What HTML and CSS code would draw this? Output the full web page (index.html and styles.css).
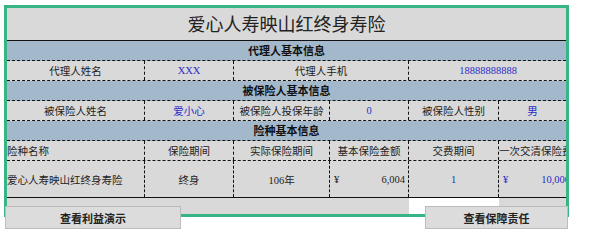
FILE: index.html
```html
<!DOCTYPE html>
<html lang="zh-CN">
<head>
<meta charset="utf-8">
<title>爱心人寿映山红终身寿险</title>
<link rel="stylesheet" href="styles.css">
</head>
<body>
<div class="frame">
  <div class="title">爱心人寿映山红终身寿险</div>
  <div class="sec">代理人基本信息</div>
  <div class="row">
    <div class="cell w1">代理人姓名</div>
    <div class="cell w2 val num">XXX</div>
    <div class="cell w34">代理人手机</div>
    <div class="cell rest val num">18888888888</div>
  </div>
  <div class="sec">被保险人基本信息</div>
  <div class="row">
    <div class="cell w1">被保险人姓名</div>
    <div class="cell w2 val">爱小心</div>
    <div class="cell w3">被保险人投保年龄</div>
    <div class="cell w4 val num">0</div>
    <div class="cell w5">被保险人性别</div>
    <div class="cell rest val">男</div>
  </div>
  <div class="sec">险种基本信息</div>
  <div class="row">
    <div class="cell w1 left">险种名称</div>
    <div class="cell w2">保险期间</div>
    <div class="cell w3">实际保险期间</div>
    <div class="cell w4">基本保险金额</div>
    <div class="cell w5">交费期间</div>
    <div class="cell w6 left clip">一次交清保险费</div>
  </div>
  <div class="row data">
    <div class="cell w1 left">爱心人寿映山红终身寿险</div>
    <div class="cell w2">终身</div>
    <div class="cell w3 num">106年</div>
    <div class="cell w4 money num"><span>¥</span><span>6,004</span></div>
    <div class="cell w5 val num">1</div>
    <div class="cell w6 money val num"><span>¥</span><span>10,000</span></div>
  </div>
  <div class="tail">
    <div class="tcell w1"></div>
    <div class="tcell w2"></div>
    <div class="tcell w3"></div>
    <div class="tcell w4"></div>
    <div class="tcell w5 blank"></div>
    <div class="tcell w6"></div>
  </div>
</div>
<div class="buttons">
  <button class="btn btn-left" type="button">查看利益演示</button>
  <button class="btn btn-right" type="button">查看保障责任</button>
</div>
</body>
</html>
```
FILE: styles.css
```css
* { box-sizing: border-box; }
html, body { margin: 0; padding: 0; background: #fff; }
body {
  font-family: "Noto Sans CJK SC", "Noto Sans", sans-serif;
  font-size: 10.5px;
  color: #222;
}
.frame {
  margin: 5px 0 0 4px;
  width: 565px;
  height: 212px;
  border: 3px solid #37b585;
  background: #fff;
  overflow: hidden;
}
.title {
  height: 33px;
  line-height: 31px;
  background: #d9d9d9;
  border-bottom: 1px solid #111;
  text-align: center;
  font-size: 18px;
  color: #222;
}
.sec {
  height: 20px;
  line-height: 19px;
  background: #a4b8cc;
  border-bottom: 1px dashed #111;
  text-align: center;
  font-weight: bold;
  font-size: 11px;
  color: #111;
}
.row {
  display: flex;
  height: 20px;
  border-bottom: 1px dashed #111;
  background: #d9d9d9;
  width: 600px;
}
.row.data {
  height: 37px;
  border-bottom: 1px solid #111;
}
.cell {
  flex: none;
  display: flex;
  align-items: center;
  justify-content: center;
  border-right: 1px dashed #111;
  white-space: nowrap;
  overflow: hidden;
}
.w1 { width: 138px; }
.w2 { width: 89px; }
.w3 { width: 96px; }
.w4 { width: 79px; }
.w5 { width: 90px; }
.w6 { width: 74px; border-right: none; }
.w34 { width: 175px; }
.rest { width: 67px; border-right: none; flex: none; }
.row .w34 + .rest { width: 158px; }
.left { justify-content: flex-start; }
.clip { overflow: visible; padding-left: 0; }
.val { color: #2a2ac8; }
.num { font-family: "Liberation Serif", "Noto Sans CJK SC", serif; font-size: 10.5px; }
.money {
  justify-content: space-between;
  padding: 0 3px 0 4px;
}
.tail {
  display: flex;
  height: 16px;
}
.tcell { flex: none; background: #d9d9d9; }
.tcell.blank { background: #fff; }
.buttons {
  display: flex;
  justify-content: space-between;
  width: 569px;
  margin-top: -11px;
  padding: 0 1px 0 5px;
}
.btn {
  height: 23px;
  margin: 0;
  padding: 0;
  background: #dcdcdc;
  border: 1px solid #bcbcbc;
  font-family: "Noto Sans CJK SC", "Noto Sans", sans-serif;
  font-size: 11px;
  font-weight: bold;
  color: #222;
  text-align: center;
}
.btn-left { width: 176px; }
.btn-right { width: 143px; }
```
